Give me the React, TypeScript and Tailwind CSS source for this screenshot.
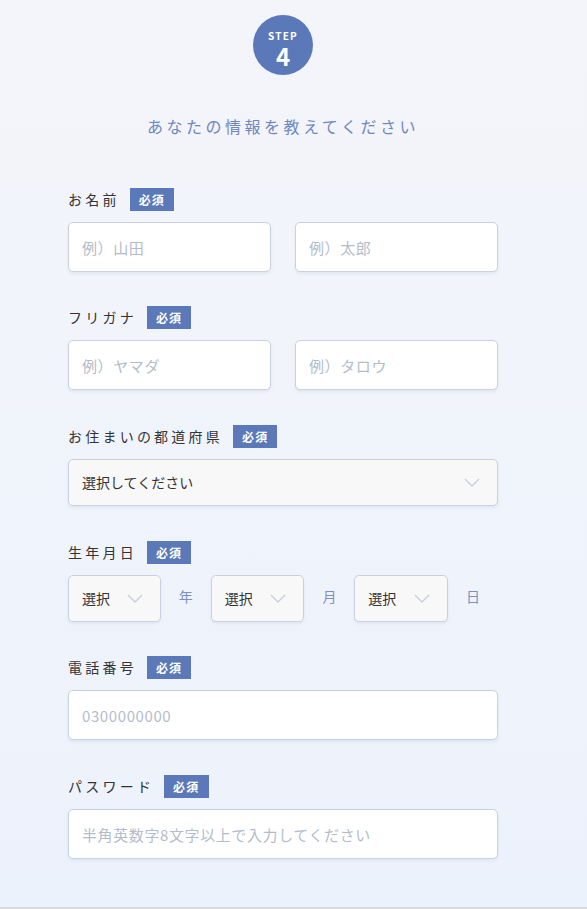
import React from 'react';

const font = { fontFamily: '"Noto Sans CJK JP", "Noto Sans", sans-serif' };

const Required = () => (
    <span className="inline-flex h-[23px] items-center bg-[#5b79b8] px-[9px] text-[12px] font-bold tracking-[0.1em] text-white">
        必須
    </span>
);

const Label: React.FC<{ text: string }> = ({ text }) => (
    <div className="flex h-[23px] items-center gap-[10px]">
        <span className="text-[14px] tracking-[0.23em] text-[#333]">{text}</span>
        <Required />
    </div>
);

const TextInput: React.FC<{ placeholder: string; className?: string }> = ({ placeholder, className = '' }) => (
    <input
        type="text"
        placeholder={placeholder}
        className={`h-[50px] rounded-[5px] border border-[#c9d0df] bg-white px-[13px] text-[15px] tracking-[0.04em] text-[#333] placeholder-[#b3bccb] shadow-[0_2px_3px_rgba(120,140,180,0.12)] outline-none ${className}`}
    />
);

const Chevron = () => (
    <svg width="16" height="9" viewBox="0 0 16 9" fill="none">
        <path d="M1 1l7 7 7-7" stroke="#c8cfdc" strokeWidth="1.4" />
    </svg>
);

const Select: React.FC<{ text: string; className?: string }> = ({ text, className = '' }) => (
    <div
        className={`flex h-[47px] items-center justify-between rounded-[5px] border border-[#c9d0df] bg-[#f8f8f8] pl-[13px] pr-[17px] shadow-[0_2px_3px_rgba(120,140,180,0.12)] ${className}`}
    >
        <span className="text-[14px] text-[#333]">{text}</span>
        <Chevron />
    </div>
);

const Unit: React.FC<{ text: string }> = ({ text }) => (
    <span className="w-[50px] pb-[4px] text-center text-[14px] text-[#7c90c4]">{text}</span>
);

export default function App() {
    return (
        <div
            style={font}
            className="h-[909px] w-full border-b-2 border-[#d9d9d9] bg-linear-to-b from-[#f4f5fa] to-[#ecf2fc]"
        >
            <div className="ml-[68px] w-[430px] pt-[15px]">
                {/* Step badge */}
                <div className="flex justify-center">
                    <div className="flex h-[60px] w-[60px] flex-col items-center rounded-full bg-[#5b79b8] pt-[16px] text-white">
                        <span className="text-[10px] font-bold leading-none tracking-[0.12em]">STEP</span>
                        <span className="mt-[3px] text-[24px] font-bold leading-none">4</span>
                    </div>
                </div>

                <h1 className="mt-[39px] text-center text-[16px] leading-[24px] tracking-[0.22em] text-[#6d87c0]">
                    あなたの情報を教えてください
                </h1>

                <div className="mt-[50px]">
                    <div>
                        <Label text="お名前" />
                        <div className="mt-[11px] flex gap-[24px]">
                            <TextInput placeholder="例）山田" className="w-[203px]" />
                            <TextInput placeholder="例）太郎" className="w-[203px]" />
                        </div>
                    </div>

                    <div className="mt-[34px]">
                        <Label text="フリガナ" />
                        <div className="mt-[11px] flex gap-[24px]">
                            <TextInput placeholder="例）ヤマダ" className="w-[203px]" />
                            <TextInput placeholder="例）タロウ" className="w-[203px]" />
                        </div>
                    </div>

                    <div className="mt-[35px]">
                        <Label text="お住まいの都道府県" />
                        <Select text="選択してください" className="mt-[11px] w-[430px]" />
                    </div>

                    <div className="mt-[35px]">
                        <Label text="生年月日" />
                        <div className="mt-[11px] flex items-center">
                            <Select text="選択" className="w-[93px]" />
                            <Unit text="年" />
                            <Select text="選択" className="w-[94px]" />
                            <Unit text="月" />
                            <Select text="選択" className="w-[94px]" />
                            <Unit text="日" />
                        </div>
                    </div>

                    <div className="mt-[34px]">
                        <Label text="電話番号" />
                        <TextInput placeholder="0300000000" className="mt-[11px] w-[430px]" />
                    </div>

                    <div className="mt-[35px]">
                        <Label text="パスワード" />
                        <TextInput placeholder="半角英数字8文字以上で入力してください" className="mt-[11px] w-[430px]" />
                    </div>
                </div>
            </div>
        </div>
    );
}
